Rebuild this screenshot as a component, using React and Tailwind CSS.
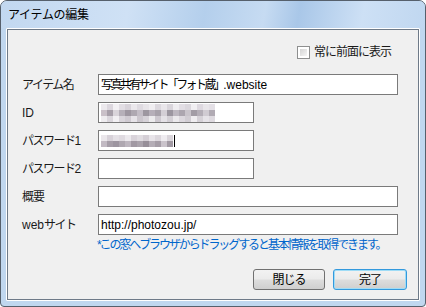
import React from "react";

const font = "font-['Liberation_Sans','Noto_Sans_CJK_JP',sans-serif]";

// mosaic (pixelated) cells for the hidden ID / password values
const idMosaic = [
  ["#ece9ed", "#dcd7de", "#f3f1f4", "#e2dee4", "#d8d3da", "#ebe8ec", "#dfdbe1", "#e8e5e9", "#f0eef1", "#dcd8de", "#e9e6ea", "#d9d5db", "#efedf0", "#e2dee4", "#dbd7dd", "#f1eff2", "#ded9e0", "#e9e6ea", "#e4e0e6"],
  ["#c9c0c8", "#a79fa9", "#d9d4da", "#b6b0b9", "#9e97a1", "#aea8b1", "#c3bdc6", "#9d97a0", "#b6afb9", "#a8a2ab", "#d3ced5", "#9c96a0", "#bdb7c0", "#aca6af", "#c9c4cb", "#a29ca5", "#b4aeb7", "#d0cbd2", "#b1abb4"],
  ["#eeecef", "#dad6dc", "#f2f0f3", "#d9d5db", "#cfcad1", "#e6e3e8", "#cbc6cd", "#d6d2d8", "#ecebed", "#cdc8cf", "#e4e1e6", "#d3cfd5", "#ebe9ec", "#dcd8de", "#d1cdd3", "#efedf0", "#d5d1d7", "#e6e3e8", "#dedae0"],
];
const pwMosaic = [
  ["#ebe7eb", "#d8d2d9", "#e5e1e6", "#dfdae0", "#ece9ed", "#d9d3da", "#e1dde2", "#d5cfd6", "#e8e4e9", "#dcd7dd", "#efecf0", "#dad5db"],
  ["#c2bac3", "#a69ea8", "#9d95a0", "#aea7b0", "#bdb6bf", "#a199a3", "#aaa3ac", "#978f99", "#b4adb6", "#a59da7", "#cac3cb", "#a29aa4"],
];

const Mosaic = ({ rows }) => (
  <div className="flex flex-col">
    {rows.map((row, i) => (
      <div key={i} className="flex">
        {row.map((c, j) => (
          <div key={j} className="w-[6px] h-[6px]" style={{ backgroundColor: c }} />
        ))}
      </div>
    ))}
  </div>
);

const Field = ({ wide = true, children }) => (
  <div
    className={`${wide ? "w-[300px]" : "w-[156px]"} h-[21px] bg-white border border-[#7a7a7a] flex items-center pl-[2px] text-[12px] text-black overflow-hidden`}
  >
    {children}
  </div>
);

const Label = ({ children }) => (
  <div className="h-[21px] flex items-center text-[12px] text-[#1a1a1a]">{children}</div>
);

export default function App() {
  return (
    <div className={`${font} w-[426px] h-[307px] bg-[#c0d7ef] border border-[#56606c] rounded-t-[7px] rounded-b-[4px] flex flex-col overflow-hidden`}>
      {/* title bar */}
      <div className="h-[27px] shrink-0 flex items-center pl-[7px] bg-[linear-gradient(100deg,#c2d8f0_0%,#cfe1f5_30%,#b4cfec_48%,#c6dbf2_62%,#a9c7e8_70%,#cde0f5_85%,#c0d7f0_100%)] text-[12px] text-black">
        <span className="tracking-[-0.3px]">アイテムの編集</span>
      </div>

      <div className="flex-1 flex flex-col px-[5px] pb-[5px]">
        <div className="flex-1 border border-white rounded-[1px]">
          <div className="h-full border border-[#6e7a88] bg-[#f0f0f0] flex flex-col">
            {/* always on top */}
            <div className="mt-[13px] flex justify-end items-center pr-[27px] gap-[4px]">
              <div className="w-[13px] h-[13px] border border-[#8e8f8f] bg-white p-[2px]">
                <div className="w-full h-full bg-[linear-gradient(135deg,#d4d4d4,#f6f6f6)]" />
              </div>
              <span className="text-[12px] tracking-[-1px] text-[#1a1a1a]">常に前面に表示</span>
            </div>

            {/* form */}
            <div className="mt-[13px] pl-[14px] grid grid-cols-[76px_1fr] gap-y-[7px]">
              <Label><span className="tracking-[-1.5px]">アイテム名</span></Label>
              <Field>
                <span className="tracking-[-2.6px]">写真共有サイト「フォト蔵」</span>
                <span>.website</span>
              </Field>

              <Label>ID</Label>
              <Field wide={false}>
                <Mosaic rows={idMosaic} />
              </Field>

              <Label><span className="tracking-[-1.5px]">パスワード</span>1</Label>
              <Field wide={false}>
                <div className="flex items-center">
                  <Mosaic rows={pwMosaic} />
                  <div className="w-[1px] h-[12px] bg-black ml-[1px]" />
                </div>
              </Field>

              <Label><span className="tracking-[-1.5px]">パスワード</span>2</Label>
              <Field wide={false} />

              <Label><span className="tracking-[-1px]">概要</span></Label>
              <Field />

              <Label>web<span className="tracking-[-1.5px]">サイト</span></Label>
              <Field>http://photozou.jp/</Field>
            </div>

            {/* hint */}
            <div className="mt-[3px] pl-[89px] text-[12px] leading-[14px] text-[#0066cc] tracking-[-2.1px]">
              *この窓へブラウザからドラッグすると基本情報を取得できます。
            </div>

            {/* buttons */}
            <div className="mt-[17px] flex justify-end gap-[8px] pr-[11px]">
              <button className="w-[72px] h-[21px] rounded-[3px] border border-[#707070] bg-[linear-gradient(#f2f2f2_0%,#ebebeb_48%,#dddddd_52%,#cfcfcf_100%)] text-[12px] text-black tracking-[-1px] flex items-center justify-center">
                閉じる
              </button>
              <button className="w-[74px] h-[21px] rounded-[3px] border border-[#3399dd] shadow-[inset_0_0_0_1px_#9fdcf6] bg-[linear-gradient(#f2f2f2_0%,#ebebeb_48%,#dddddd_52%,#cfcfcf_100%)] text-[12px] text-black flex items-center justify-center">
                <span className="tracking-[-1px]">完了</span>
              </button>
            </div>
          </div>
        </div>
      </div>
    </div>
  );
}
